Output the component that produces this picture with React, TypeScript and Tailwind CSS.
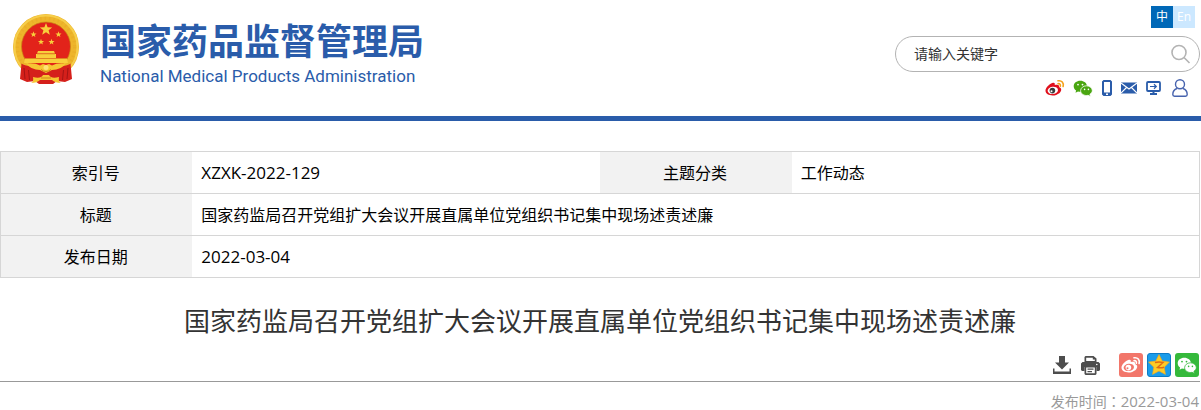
import { useState } from "react";

const star = (cx: number, cy: number, r: number, inner = 0.42) =>
  Array.from({ length: 10 }, (_, i) => {
    const a = (Math.PI / 5) * i - Math.PI / 2;
    const d = i % 2 ? r * inner : r;
    return `${(cx + d * Math.cos(a)).toFixed(2)},${(cy + d * Math.sin(a)).toFixed(2)}`;
  }).join(" ");

function Emblem() {
  return (
    <svg className="h-[70px] w-[66px]" viewBox="0 0 66 70" aria-hidden="true">
      <circle cx="33" cy="33" r="33" fill="#eeb52b" />
      <circle cx="33" cy="33" r="29" fill="none" stroke="#d99a1c" strokeWidth="4" strokeDasharray="1.500 3" opacity="0.22" />
      <circle cx="33" cy="33" r="31.500" fill="none" stroke="#f6ce4a" strokeWidth="2" />
      <circle cx="33" cy="32.500" r="24.500" fill="#e2231a" stroke="#c98a14" strokeWidth="0.7" />
      <g fill="#f8cf3c">
        <polygon points={star(33, 15.5, 6.5)} />
        <polygon points={star(20.5, 20.5, 3.2)} />
        <polygon points={star(45.5, 20.5, 3.2)} />
        <polygon points={star(28, 28, 3.2)} />
        <polygon points={star(38.5, 28, 3.2)} />
        <path d="M25 37h16l1 2.500H24zM23 40h20v4H23zM12 44.500h42l1 4.500H11z" />
      </g>
      <path d="M24 40h18M12 44.500h42" stroke="#d98a1c" strokeWidth="0.6" />
      <path d="M8.500 49.500c4 3 8 2 12 3 4 1 8 4 12.500 4s8.500-3 12.500-4 8 0 12-3l1.500 15.500-7 3-8-1-4 3H26l-4-3-8 1-7-3z" fill="#d5201b" />
      <path d="M11 54l1 11M15.500 56l1 10M50.500 56l-1 10M55 54l-1 11" stroke="#a41414" strokeWidth="1" />
      <path d="M13 49.500q9-1 14 2l3-1.500 3 1 3-1 3 1.500q5-3 14-2-5 6.500-14 6.500l-6 3-6-3q-9 0-14-6.500z" fill="#f6c633" />
      <path d="M20 63q8 2 10-2h6q2 4 10 2-1 5 2 6-6 0-9-3H27q-3 3-9 3 3-1 2-6z" fill="#f6c633" />
      <path d="M28 55.500q5 4 10 0M28 64h10" fill="none" stroke="#cf8519" strokeWidth="1" />
      <circle cx="33" cy="53.500" r="2.500" fill="#ffe276" />
    </svg>
  );
}

function Weibo({ white = false }: { white?: boolean }) {
  return (
    <svg className="h-[18px] w-5" viewBox="0 0 20 18" fill="none" aria-hidden="true">
      <path
        d="M7.300 4.100C9 3.400 10.300 4 9.700 6.100c2.300-.900 5-.600 4.300 2 4 1.300 2.400 6.300-2.800 7.800C6 17.400.500 15.400.500 11.700.500 9 4 5.400 7.300 4.100z"
        fill={white ? "#fff" : "#e0101c"}
      />
      <ellipse cx="7.800" cy="11.400" rx="5.200" ry="3.600" transform="rotate(-8 7.800 11.400)" fill={white ? "#f2766a" : "#fff"} />
      <circle cx="7.400" cy="11.600" r="2.800" fill={white ? "#fff" : "#3c3c3c"} />
      <circle cx="6.500" cy="12.200" r="1" fill={white ? "#f2766a" : "#fff"} />
      <path d="M13 1.800c3.700-.7 6.100 2.200 5.100 5.700M13 4.700c1.800-.3 2.800.8 2.300 2.500" stroke={white ? "#fff" : "#f4a11b"} strokeWidth="1.600" strokeLinecap="round" />
    </svg>
  );
}

function Wechat({ white = false }: { white?: boolean }) {
  const body = white ? "#fff" : "#4aa611";
  const gap = white ? "#35b93b" : "#fff";
  return (
    <svg className="h-[17px] w-5" viewBox="0 0 20 17" aria-hidden="true">
      <path d="M7.300.800C3.500.800.700 3.200.700 6.200c0 1.800.9 3.300 2.400 4.300L2.500 12.700 5 11.400c4.600 1.100 8.900-1.400 8.900-5.200 0-3-2.900-5.400-6.600-5.400z" fill={body} />
      <path d="M13.500 5.800c-3.300 0-5.900 2.200-5.900 4.900 0 3.200 3.600 5.500 7.500 4.600l2.400 1.200-.6-2.200c1.500-.9 2.400-2.200 2.400-3.700 0-2.600-2.600-4.800-5.800-4.800z" fill={body} stroke={gap} strokeWidth=".8" />
      <g fill={gap}>
        <circle cx="5" cy="4.600" r=".9" />
        <circle cx="9.500" cy="4.600" r=".9" />
        <circle cx="11.600" cy="9.400" r=".8" />
        <circle cx="15.400" cy="9.400" r=".8" />
      </g>
    </svg>
  );
}

function SocialLinks() {
  return (
    <nav className="mt-[7px] mr-3 flex h-[18px] items-center">
      <a href="#weibo" aria-label="微博"><Weibo /></a>
      <a href="#wechat" aria-label="微信" className="ml-2"><Wechat /></a>
      <a href="#mobile" aria-label="手机版" className="ml-[9px]">
        <svg className="h-4 w-[10px]" viewBox="0 0 10 16">
          <path fillRule="evenodd" d="M1.500 0h7L10 1.500v13L8.500 16h-7L0 14.500v-13zM2 2v10.500h6V2zM4 13.500V15h2v-1.500z" fill="#2a5caa" />
        </svg>
      </a>
      <a href="#mail" aria-label="邮箱" className="ml-[9px]">
        <svg className="h-3 w-4" viewBox="0 0 16 12">
          <rect y=".5" width="16" height="11" fill="#2a5caa" />
          <path d="M0 1l8 6 8-6M0 11l5.500-5.500M16 11l-5.500-5.500" fill="none" stroke="#fff" strokeWidth="1.100" />
        </svg>
      </a>
      <a href="#desktop" aria-label="电脑版" className="ml-[9px]">
        <svg className="h-[14px] w-[15px]" viewBox="0 0 15 14" fill="none" stroke="#2a5caa">
          <rect x="1" y="1" width="13" height="9" rx="1" strokeWidth="1.800" />
          <path d="M4 5.500h6M8 3.300l2.300 2.200L8 7.700" strokeWidth="1.200" />
          <path d="M7.500 10v2.500M4 13h7" strokeWidth="2" />
        </svg>
      </a>
      <a href="#user" aria-label="用户" className="ml-[11px]">
        <svg className="h-[18px] w-4" viewBox="0 0 16 18" fill="none" stroke="#4763ae" strokeWidth="1.400">
          <circle cx="8" cy="5.300" r="4.500" />
          <path d="M5 9.500C2.200 10.500.8 12.800.8 15.500c0 1.200.6 1.700 1.700 1.700h11c1.100 0 1.700-.5 1.700-1.700 0-2.700-1.400-5-4.200-6" />
        </svg>
      </a>
    </nav>
  );
}

function Header() {
  const [keyword, setKeyword] = useState("");

  return (
    <header className="border-b-[5px] border-[#2a5caa]">
      <div className="flex h-[116px] max-w-[1200px] items-start justify-between">
        <a href="#home" className="flex pt-[14px] pl-[13px] text-[#2a5caa]">
          <Emblem />
          <div className="ml-[21px] pt-[6px]">
            <h1 className="text-4xl leading-[44px] font-bold">国家药品监督管理局</h1>
            <p className="font-[Roboto,sans-serif] text-[17px] leading-6">National Medical Products Administration</p>
          </div>
        </a>
        <div className="flex flex-col items-end pt-[6px]">
          <div className="mr-[5px] flex text-xs text-white">
            <button className="size-[22px] bg-[#0068b7]">中</button>
            <button className="size-[22px] bg-[#cce8ff]">En</button>
          </div>
          <form className="mt-2 flex h-9 w-[305px] items-center rounded-full border border-[#b3b3b3] pr-2 pl-[18px]" onSubmit={(e) => e.preventDefault()}>
            <input
              className="min-w-0 flex-1 text-sm text-[#333] outline-none placeholder:text-[#333]"
              aria-label="请输入关键字"
              placeholder="请输入关键字"
              value={keyword}
              onChange={(e) => setKeyword(e.target.value)}
            />
            <button aria-label="搜索">
              <svg className="size-5" viewBox="0 0 20 20" fill="none" stroke="#b3b3b3" strokeWidth="1.600">
                <circle cx="8" cy="8.500" r="7" />
                <path d="M13 13.500l5.500 5.500" />
              </svg>
            </button>
          </form>
          <SocialLinks />
        </div>
      </div>
    </header>
  );
}

function InfoTable() {
  const th = "bg-[#f2f2f2] pr-[2px] text-center font-normal";
  return (
    <table className="mt-[30px] w-full table-fixed border-collapse border border-[#d6d6d6] text-base text-black">
      <colgroup>
        <col className="w-[16%]" />
        <col className="w-[34%]" />
        <col className="w-[16%]" />
        <col className="w-[34%]" />
      </colgroup>
      <tbody>
        <tr className="h-[42px] border-b border-[#d6d6d6]">
          <th scope="row" className={th}>索引号</th>
          <td className="px-[9px] text-[17px]">XZXK-2022-129</td>
          <th scope="row" className={th}>主题分类</th>
          <td className="px-[9px]">工作动态</td>
        </tr>
        <tr className="h-[42px] border-b border-[#d6d6d6]">
          <th scope="row" className={th}>标题</th>
          <td colSpan={3} className="px-[9px]">国家药监局召开党组扩大会议开展直属单位党组织书记集中现场述责述廉</td>
        </tr>
        <tr className="h-[42px]">
          <th scope="row" className={th}>发布日期</th>
          <td colSpan={3} className="px-[9px] text-[17px]">2022-03-04</td>
        </tr>
      </tbody>
    </table>
  );
}

function Toolbar() {
  return (
    <div className="mt-3 flex items-center justify-end border-b border-[#999] pr-px pb-1">
      <button aria-label="下载">
        <svg className="h-[18px] w-[18px]" viewBox="0 0 18 18" fill="#4d4d4d">
          <path d="M6 0h6v6.500h4L9 13.500 2 6.500h4zM0 12.500h1.500v3h15v-3H18V18H0z" />
        </svg>
      </button>
      <button aria-label="打印" className="ml-[10px]">
        <svg className="h-[19px] w-[19px]" viewBox="0 0 19 19" fill="#4d4d4d">
          <path fillRule="evenodd" d="M4.500 0h8L15.500 2.500V6h-12V1zM5.200 1.700V5h8.600V3.500h-2V1.700z" />
          <path d="M1.500 6h16L19 7.500V14l-1 1h-2.500v-4h-12v4H1l-1-1V7.500z" />
          <path fillRule="evenodd" d="M3.500 11h12v7l-1 1h-10l-1-1zM5.200 11.500v5.800h8.600v-5.800z" />
          <path d="M6.500 12.500h6v1.200h-6zM6.500 15h4.500v1.200h-4.500z" />
          <circle cx="15.800" cy="8.500" r=".8" fill="#fff" />
        </svg>
      </button>
      <button aria-label="分享到微博" className="ml-[19px] flex size-6 items-center justify-center rounded-[3px] bg-[#f2766a]">
        <Weibo white />
      </button>
      <button aria-label="分享到QQ空间" className="ml-1 size-6">
        <svg className="size-6" viewBox="0 0 24 24">
          <rect x=".5" y=".5" width="23" height="23" rx="2.500" fill="#1a9cea" stroke="#0d7bc6" />
          <polygon points={star(12, 12.5, 11, 0.5)} fill="#fccb26" stroke="#f7a81b" strokeWidth=".6" />
          <path d="M8 9.500q4-1 8 0l-5.500 5q3.500.700 6.500-.300" fill="none" stroke="#e06a13" strokeWidth="1.500" />
        </svg>
      </button>
      <button aria-label="分享到微信" className="ml-1 flex size-6 items-center justify-center rounded-[3px] bg-[#35b93b]">
        <Wechat white />
      </button>
    </div>
  );
}

export default function App() {
  return (
    <div className="bg-white font-['Open_Sans','Noto_Sans_CJK_SC',sans-serif]">
      <Header />
      <main className="max-w-[1200px]">
        <InfoTable />
        <h2 className="mt-6 text-center text-[26px] leading-[39px] text-[#333]">
          国家药监局召开党组扩大会议开展直属单位党组织书记集中现场述责述廉
        </h2>
        <Toolbar />
        <p className="mt-2 pr-px text-right text-sm leading-[22px] text-[#999]">
          发布时间<span lang="zh-Hant" className="font-['Noto_Sans_CJK_TC',sans-serif]">：</span>
          <time className="text-[15px]">2022-03-04</time>
        </p>
      </main>
    </div>
  );
}
